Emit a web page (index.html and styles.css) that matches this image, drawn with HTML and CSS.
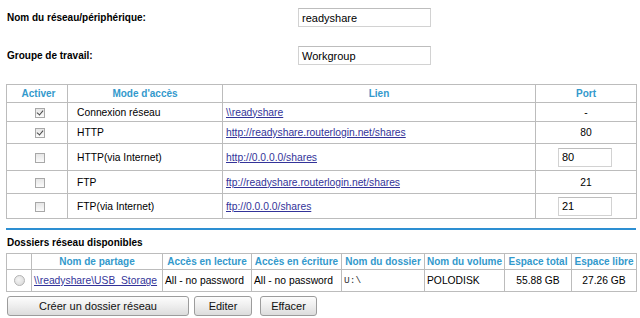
FILE: index.html
```html
<!DOCTYPE html>
<html lang="fr">
<head>
<meta charset="utf-8">
<title>ReadySHARE</title>
<link rel="stylesheet" href="styles.css">
</head>
<body>
<div class="page">
  <div class="form">
    <div class="field">
      <span class="label">Nom du réseau/périphérique:</span>
      <span class="input wide">readyshare</span>
    </div>
    <div class="field">
      <span class="label">Groupe de travail:</span>
      <span class="input wide">Workgroup</span>
    </div>
  </div>

  <table class="grid access">
    <colgroup>
      <col class="c-act"><col class="c-mode"><col class="c-link"><col class="c-port">
    </colgroup>
    <tr class="h-head">
      <th>Activer</th><th>Mode d'accès</th><th>Lien</th><th>Port</th>
    </tr>
    <tr class="h1">
      <td class="ctr"><span class="cb checked"></span></td>
      <td class="mode">Connexion réseau</td>
      <td class="link"><a href="#">\\readyshare</a></td>
      <td class="ctr">-</td>
    </tr>
    <tr class="h2">
      <td class="ctr"><span class="cb checked"></span></td>
      <td class="mode">HTTP</td>
      <td class="link"><a href="#">http://readyshare.routerlogin.net/shares</a></td>
      <td class="ctr">80</td>
    </tr>
    <tr class="h3">
      <td class="ctr"><span class="cb"></span></td>
      <td class="mode">HTTP(via Internet)</td>
      <td class="link"><a href="#">http://0.0.0.0/shares</a></td>
      <td class="portin"><span class="input port">80</span></td>
    </tr>
    <tr class="h4">
      <td class="ctr"><span class="cb"></span></td>
      <td class="mode">FTP</td>
      <td class="link"><a href="#">ftp://readyshare.routerlogin.net/shares</a></td>
      <td class="ctr">21</td>
    </tr>
    <tr class="h5">
      <td class="ctr"><span class="cb"></span></td>
      <td class="mode">FTP(via Internet)</td>
      <td class="link"><a href="#">ftp://0.0.0.0/shares</a></td>
      <td class="portin"><span class="input port">21</span></td>
    </tr>
  </table>

  <div class="rule"></div>

  <div class="section-title">Dossiers réseau disponibles</div>

  <table class="grid folders">
    <colgroup>
      <col class="f1"><col class="f2"><col class="f3"><col class="f4"><col class="f5"><col class="f6"><col class="f7"><col class="f8">
    </colgroup>
    <tr class="fh">
      <th></th><th>Nom de partage</th><th>Accès en lecture</th><th>Accès en écriture</th><th>Nom du dossier</th><th>Nom du volume</th><th>Espace total</th><th>Espace libre</th>
    </tr>
    <tr class="fr">
      <td class="ctr"><span class="radio"></span></td>
      <td class="l"><a href="#">\\readyshare\USB_Storage</a></td>
      <td class="l">All - no password</td>
      <td class="l">All - no password</td>
      <td class="l mono">U:\</td>
      <td class="l">POLODISK</td>
      <td class="ctr">55.88 GB</td>
      <td class="ctr">27.26 GB</td>
    </tr>
  </table>

  <div class="buttons">
    <button class="btn b-create">Créer un dossier réseau</button>
    <button class="btn b-edit">Editer</button>
    <button class="btn b-del">Effacer</button>
  </div>
</div>
</body>
</html>
```

FILE: styles.css
```css
html, body {
  margin: 0;
  padding: 0;
  background: #ffffff;
}

.page {
  padding: 8px 4px 0 6px;
  font-family: "Liberation Sans", Arial, sans-serif;
  font-size: 10.3px;
  color: #000;
}

.form {
  display: flex;
  flex-direction: column;
  gap: 19px;
}

.field {
  display: flex;
  align-items: center;
  height: 19px;
}

.label {
  width: 291px;
  padding-left: 1px;
  font-weight: bold;
  font-size: 10px;
}

.input {
  box-sizing: border-box;
  display: inline-flex;
  align-items: center;
  height: 19px;
  padding-left: 3px;
  border: 1px solid #d2d2d2;
  border-top-color: #bdbdbd;
  background: #fff;
  font-size: 11px;
  color: #000;
}

.input.wide {
  width: 133px;
}

.input.port {
  width: 54px;
  padding-left: 3px;
}

/* tables */
.grid {
  border-collapse: collapse;
  table-layout: fixed;
  width: 630px;
  margin-top: 19px;
}

.grid th,
.grid td {
  border: 1px solid #bcbcbc;
  padding: 0;
  white-space: nowrap;
  overflow: hidden;
}

.grid th {
  font-weight: bold;
  font-size: 10px;
  color: #3399cc;
  text-align: center;
}

.c-act { width: 61px; }
.c-mode { width: 155px; }
.c-link { width: 313px; }
.c-port { width: 101px; }

.h-head { height: 18px; }
.h1 { height: 19px; }
.h2 { height: 22px; }
.h3 { height: 27px; }
.h4 { height: 23px; }
.h5 { height: 25px; }

.access th:first-child { padding-left: 3px; }
.access td.ctr:first-child { padding-left: 6px; }

.ctr { text-align: center; }

.mode { padding-left: 9px !important; }
.link { padding-left: 3px !important; }

.portin { padding-left: 22px !important; }

a {
  color: #333399;
  text-decoration: underline;
}

/* checkbox */
.cb {
  display: inline-block;
  box-sizing: border-box;
  width: 10px;
  height: 10px;
  border: 1px solid #a8a8a8;
  background: linear-gradient(#e6e6e6, #fbfbfb);
  vertical-align: middle;
  position: relative;
}

.cb.checked::after {
  content: "";
  position: absolute;
  left: 2px;
  top: 0px;
  width: 3px;
  height: 5px;
  border-right: 1.5px solid #4a4a4a;
  border-bottom: 1.5px solid #4a4a4a;
  transform: rotate(40deg);
}

.rule {
  width: 630px;
  height: 2px;
  margin-top: 9px;
  background: #2d8fd2;
}

.section-title {
  margin-top: 6px;
  font-weight: bold;
  font-size: 10px;
  padding-left: 1px;
  height: 14px;
  line-height: 14px;
}

.folders {
  margin-top: 3px;
}

.f1 { width: 25px; }
.f2 { width: 131px; }
.f3 { width: 89px; }
.f4 { width: 90px; }
.f5 { width: 83px; }
.f6 { width: 80px; }
.f7 { width: 67px; }
.f8 { width: 65px; }

.fh { height: 16px; }
.fr { height: 22px; }

.folders td.l { padding-left: 2px; }

.mono {
  font-family: "Liberation Mono", "Courier New", monospace;
  font-size: 9.5px;
  color: #333;
}

.radio {
  display: inline-block;
  box-sizing: border-box;
  width: 11px;
  height: 11px;
  border: 1px solid #b4b4b4;
  border-radius: 50%;
  background: radial-gradient(circle at 40% 40%, #f4f4f4, #d6d6d6);
  vertical-align: middle;
  margin-left: 0;
}

.buttons {
  display: flex;
  gap: 5px;
  margin-top: 4px;
  padding-left: 1px;
}

.btn {
  box-sizing: border-box;
  height: 20px;
  border: 1px solid #9c9c9c;
  border-radius: 3px;
  background: linear-gradient(#fdfdfd, #ececec 55%, #dcdcdc);
  font-family: "Liberation Sans", Arial, sans-serif;
  font-size: 11px;
  color: #111;
  padding: 0;
}

.b-create { width: 182px; }
.b-edit { width: 58px; }
.b-del { width: 57px; margin-left: 3px; }
```
